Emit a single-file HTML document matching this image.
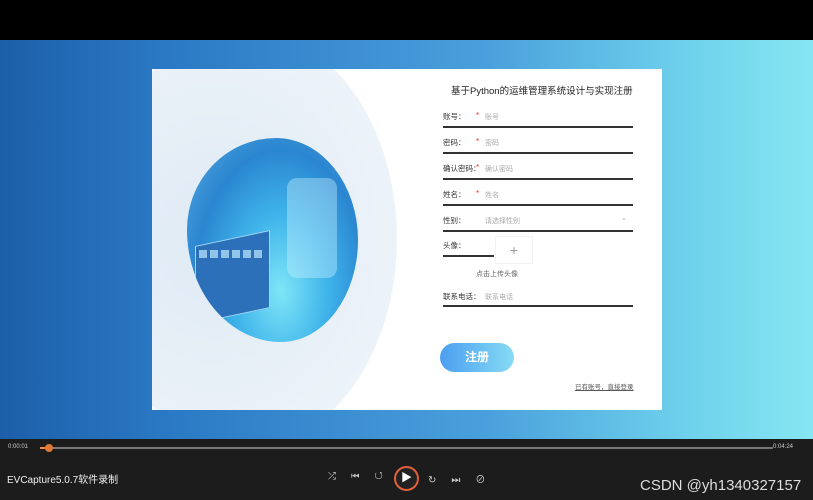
<!DOCTYPE html><html><head><meta charset="utf-8"><style>
*{margin:0;padding:0;box-sizing:border-box}
body{width:813px;height:500px;overflow:hidden;background:#000;font-family:"Liberation Sans","Noto Sans CJK SC",sans-serif;position:relative}
.abs{position:absolute}
#vid{left:0;top:40px;width:813px;height:399px;background:linear-gradient(90deg,#1c5fa8 0%,#2a78c4 20%,#4aa0dc 60%,#6fd2ec 85%,#86e6f2 100%)}
#card{left:152px;top:69px;width:510px;height:341px;background:#fff;overflow:hidden}
.haze{left:-60px;top:-40px;width:305px;height:420px;border-radius:50%;background:radial-gradient(ellipse at 40% 50%,#dfeaf4 0%,#eaf1f8 60%,#f3f7fb 100%)}
.blob{left:35px;top:69px;width:171px;height:204px;border-radius:52% 48% 45% 55%/45% 50% 50% 55%;background:radial-gradient(ellipse at 55% 75%,#7fe6f8 0%,#3fb4ea 35%,#2a86d0 65%,#5aa8e0 100%);overflow:hidden}
.t{font-size:9.5px;color:#222}
.lab{font-size:7.5px;color:#333}
.ph{font-size:7px;color:#aaa}
.star{font-size:8px;color:#e33}
.ln{height:1.5px;background:#333}
</style></head><body>
<div class="abs" id="vid"></div>
<div class="abs" id="card">
 <div class="abs haze"></div>
 <div class="abs blob">
  <div class="abs" style="left:8px;top:100px;width:75px;height:78px;background:#2b70b8;transform:skewY(-12deg);border:1px solid #9cd8f8"></div>
  <div class="abs" style="left:12px;top:112px;width:66px;height:8px;background:repeating-linear-gradient(90deg,#bfe9ff 0 8px,transparent 8px 11px);opacity:.7"></div>
  <div class="abs" style="left:100px;top:40px;width:50px;height:100px;background:rgba(200,240,255,.4);border-radius:10px"></div>
 </div>
 <div class="abs t" style="left:299px;top:14px">基于Python的运维管理系统设计与实现注册</div>
</div>
<div class="abs lab" style="left:443px;top:111px">账号：</div><div class="abs star" style="left:476px;top:111px">*</div><div class="abs ph" style="left:485px;top:112px">账号</div><div class="abs ln" style="left:443px;top:126px;width:190px"></div>
<div class="abs lab" style="left:443px;top:137px">密码：</div><div class="abs star" style="left:476px;top:137px">*</div><div class="abs ph" style="left:485px;top:138px">密码</div><div class="abs ln" style="left:443px;top:152px;width:190px"></div>
<div class="abs lab" style="left:443px;top:163px">确认密码：</div><div class="abs star" style="left:476px;top:163px">*</div><div class="abs ph" style="left:485px;top:164px">确认密码</div><div class="abs ln" style="left:443px;top:178px;width:190px"></div>
<div class="abs lab" style="left:443px;top:189px">姓名：</div><div class="abs star" style="left:476px;top:189px">*</div><div class="abs ph" style="left:485px;top:190px">姓名</div><div class="abs ln" style="left:443px;top:204px;width:190px"></div>
<div class="abs lab" style="left:443px;top:215px">性别：</div><div class="abs ph" style="left:485px;top:216px">请选择性别</div><div class="abs ph" style="left:621px;top:214px">⌄</div><div class="abs ln" style="left:443px;top:230px;width:190px"></div>
<div class="abs lab" style="left:443px;top:240px">头像：</div><div class="abs ln" style="left:443px;top:255px;width:51px"></div>
<div class="abs" style="left:495px;top:236px;width:38px;height:28px;border:1px solid #f2f2f2;color:#999;font-size:14px;text-align:center;line-height:26px">+</div>
<div class="abs ph" style="left:476px;top:269px;color:#666">点击上传头像</div>
<div class="abs lab" style="left:443px;top:291px">联系电话：</div><div class="abs ph" style="left:485px;top:292px">联系电话</div><div class="abs ln" style="left:443px;top:305px;width:190px"></div>
<div class="abs" style="left:440px;top:343px;width:74px;height:29px;border-radius:15px;background:linear-gradient(90deg,#4b9ff0,#86dbf5);color:#fff;font-size:12px;font-weight:bold;text-align:center;line-height:29px">注册</div>
<div class="abs" style="left:575px;top:381px;font-size:6.5px;color:#555;text-decoration:underline">已有账号，直接登录</div>
<div class="abs" style="left:0;top:439px;width:813px;height:61px;background:#1c1c1c"></div>
<div class="abs" style="left:8px;top:444px;font-size:6px;color:#ccc">0:00:01</div>
<div class="abs" style="left:773px;top:444px;font-size:6px;color:#ccc">0:04:24</div>
<div class="abs" style="left:40px;top:447px;width:733px;height:2px;background:#777"></div>
<div class="abs" style="left:40px;top:447px;width:9px;height:2px;background:#f08a3c"></div>
<div class="abs" style="left:45px;top:444px;width:8px;height:8px;border-radius:50%;background:#e07a35"></div>
<div class="abs" style="left:7px;top:471px;font-size:10px;color:#eee">EVCapture5.0.7软件录制</div>
<div class="abs" style="left:328px;top:471px;font-size:10px;color:#ccc;letter-spacing:15px">⤮⏮↺</div>
<div class="abs" style="left:394px;top:466px;width:25px;height:25px;border-radius:50%;border:2px solid #e0603a;background:#222;color:#fff;font-size:11px;text-align:center;line-height:21px">▶</div>
<div class="abs" style="left:428px;top:471px;font-size:10px;color:#ccc;letter-spacing:15px">↻⏭⊘</div>
<div class="abs" style="left:640px;top:477px;font-size:15px;color:#ddd">CSDN @yh1340327157</div>
</body></html>
